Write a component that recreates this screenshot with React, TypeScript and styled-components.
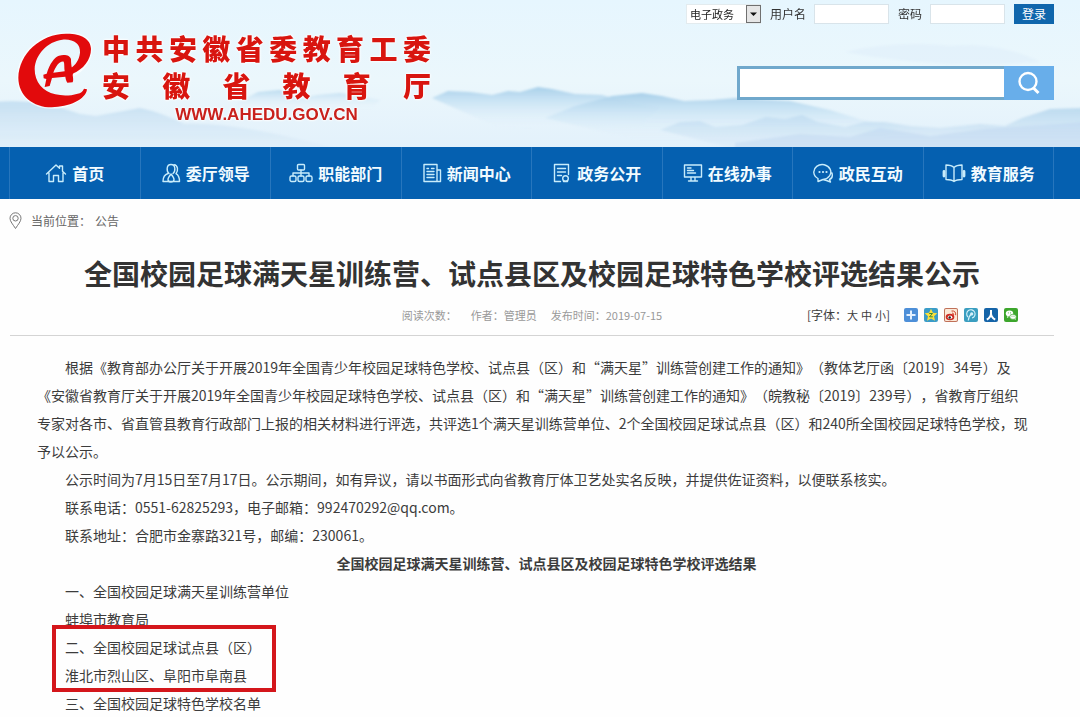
import React from "react";
import styled, { createGlobalStyle } from "styled-components";

const GlobalStyle = createGlobalStyle`
  * { box-sizing: border-box; }
  body {
    margin: 0;
    background: #fefefe;
    color: #3c3c3c;
    font-family: "Noto Sans CJK SC", "Microsoft YaHei", sans-serif;
    font-size: 14px;
    text-spacing-trim: space-all;
  }
  p, h1, h2 { margin: 0; }
  button, input, select { font-family: inherit; }
  button { cursor: pointer; }
`;

/* ---------- header ---------- */

const Header = styled.header`
  position: relative;
  overflow: hidden;
  background: #e8f6fd;
`;

const Backdrop = styled.svg`
  position: absolute;
  inset: 0;
  width: 100%;
  height: 100%;
`;

const HeaderInner = styled.div`
  position: relative;
  display: flex;
  justify-content: space-between;
  align-items: flex-start;
  padding: 0 26px 22px 12px;
`;

const Brand = styled.a`
  display: flex;
  align-items: flex-start;
  gap: 7px;
  padding-top: 30px;
  color: #d8150f;
  text-decoration: none;
`;

const BrandText = styled.div`
  width: 329px;
  text-shadow: 0 0 2px #fff, 0 0 2px #fff, 0 0 3px #fff;
`;

const BrandName = styled.div`
  font-size: 28px;
  line-height: 37px;
  font-weight: 900;
  text-align: justify;
  text-align-last: justify;
`;

const BrandUrl = styled.div`
  font-family: "Liberation Sans", Arial, sans-serif;
  font-size: 17px;
  line-height: 21px;
  font-weight: 700;
  text-align: center;
  color: #c8201c;
`;

const HeaderTools = styled.div`
  display: flex;
  flex-direction: column;
  align-items: flex-end;
  gap: 42px;
  padding-top: 4px;
`;

const LoginForm = styled.form`
  display: flex;
  align-items: center;
  gap: 9px;
  font-size: 12px;
  line-height: 20px;
  color: #333;
`;

const LoginField = styled.label`
  display: flex;
  align-items: center;
  gap: 8px;
`;

const LoginInput = styled.input`
  width: 75px;
  height: 20px;
  border: 1px solid #d9e4ea;
  background: #fff;
  padding: 0 4px;
  font-size: 12px;
`;

const SelectBox = styled.div`
  position: relative;
  display: flex;
`;

const RoleSelect = styled.select`
  appearance: none;
  width: 75px;
  height: 20px;
  padding: 0 3px;
  border: 1px solid #e3ebee;
  border-radius: 0;
  background: #fff;
  color: #222;
  font-size: 11px;
`;

const SelectArrow = styled.svg`
  position: absolute;
  right: 0;
  top: 1px;
  pointer-events: none;
`;

const LoginButton = styled.button`
  width: 40px;
  height: 20px;
  border: 0;
  padding: 0;
  background: #0f66ac;
  color: #fff;
  font-size: 12px;
  line-height: 20px;
`;

const SearchForm = styled.form`
  display: flex;
  width: 317px;
  height: 34px;
`;

const SearchInput = styled.input`
  flex: 1;
  min-width: 0;
  border: 3px solid #70a8cc;
  border-right: 0;
  background: #fff;
  padding: 0 8px;
  font-size: 14px;
`;

const SearchButton = styled.button`
  display: flex;
  align-items: center;
  justify-content: center;
  width: 50px;
  border: 0;
  padding: 0;
  background: #68aeea;
`;

/* ---------- navigation ---------- */

const NavBar = styled.nav`
  padding: 0 26px 0 9px;
  background: #0560b0;
`;

const NavList = styled.ul`
  display: flex;
  margin: 0;
  padding: 0;
  list-style: none;
  border-right: 1px solid #2776bd;
`;

const NavItem = styled.li`
  flex: 1;
  border-left: 1px solid #2776bd;
`;

const NavLink = styled.a`
  display: flex;
  align-items: center;
  justify-content: center;
  gap: 5px;
  height: 52px;
  color: #f2fbff;
  font-size: 16px;
  font-weight: 700;
  text-decoration: none;
`;

const NavIcon = styled.svg`
  flex: none;
  height: 20px;
  fill: none;
  stroke: #c8ecfb;
  stroke-width: 1.4;
  stroke-linejoin: round;
  stroke-linecap: round;
`;

/* ---------- article ---------- */

const Breadcrumb = styled.div`
  display: flex;
  align-items: center;
  gap: 9px;
  padding: 11px 26px 0 9px;
  font-size: 12px;
  line-height: 22px;
  color: #666;
`;

const CrumbLink = styled.a`
  margin-left: 4px;
  color: #666;
  text-decoration: none;
`;

const Article = styled.article`
  padding: 21px 26px 0 10px;
`;

const Title = styled.h1`
  font-size: 28px;
  line-height: 40px;
  font-weight: 700;
  text-align: center;
  color: #333;
`;

const MetaRow = styled.div`
  display: grid;
  grid-template-columns: 1fr auto 1fr;
  align-items: center;
  height: 43px;
  padding-top: 2px;
  border-bottom: 1px solid #d4d4d4;
`;

const Meta = styled.div`
  grid-column: 2;
  display: flex;
  gap: 14px;
  font-size: 11px;
  line-height: 16px;
  color: #999;
`;

const MetaTools = styled.div`
  display: flex;
  align-items: center;
  justify-content: flex-end;
  gap: 14px;
  padding-right: 36px;
  font-size: 12px;
  line-height: 16px;
`;

const SizePicker = styled.div`
  display: flex;
  white-space: nowrap;
`;

const SizeButton = styled.button`
  border: 0;
  padding: 0;
  margin-right: 3px;
  background: none;
  color: inherit;
  font-size: 11px;
  line-height: 16px;
  &:last-of-type { margin-right: 0; }
`;

const ShareList = styled.div`
  display: flex;
  gap: 6px;
`;

const ShareLink = styled.a`
  display: flex;
`;

const Body = styled.div`
  padding: 17px 26px 0 27px;
  line-height: 28px;
`;

const Para = styled.p`
  text-indent: 28px;
`;

const BodyHeading = styled.h2`
  font-size: 14px;
  line-height: 28px;
  font-weight: 700;
  text-align: center;
  padding-left: 28px;
`;

const Marked = styled.div`
  position: relative;
  width: fit-content;
  &::after {
    content: "";
    position: absolute;
    inset: -8px -15px -3px 15px;
    border: 4px solid #d4161b;
    pointer-events: none;
  }
`;

function HeaderBackdrop() {
  return (
    <Backdrop viewBox="0 0 1080 147" preserveAspectRatio="none" aria-hidden="true">
      <defs>
        <linearGradient id="sky" x1="0" y1="0" x2="0" y2="1">
          <stop offset="0" stopColor="#e6f6fe" />
          <stop offset="0.55" stopColor="#ebf7fc" />
          <stop offset="1" stopColor="#e3f1fb" />
        </linearGradient>
        <linearGradient id="ridge" x1="0" y1="0" x2="0" y2="1">
          <stop offset="0" stopColor="#a9d0ea" />
          <stop offset="0.4" stopColor="#c9e3f4" stopOpacity="0.8" />
          <stop offset="1" stopColor="#e4f2fb" stopOpacity="0" />
        </linearGradient>
        <linearGradient id="near" x1="0" y1="0" x2="0" y2="1">
          <stop offset="0" stopColor="#bcdaef" />
          <stop offset="1" stopColor="#d8e9f7" stopOpacity="0.3" />
        </linearGradient>
        <filter id="soft" x="-5%" y="-20%" width="110%" height="140%">
          <feGaussianBlur stdDeviation="1" />
        </filter>
      </defs>
      <rect width="1080" height="147" fill="url(#sky)" />
      <g filter="url(#soft)">
        <path d="M845 52 Q900 40 950 46 Q1000 42 1040 62 Q940 70 845 52Z" fill="#dfeefa" opacity="0.6" />
        <path d="M-5 102 Q40 98 80 114 L96 116 L140 108 Q160 112 185 124 Q240 122 340 150 H-5Z" fill="url(#near)" opacity="0.8" />
        <path d="M235 104 L258 92 L280 90 L300 98 L318 95 L340 93 L380 100 L372 108 H240Z" fill="url(#ridge)" opacity="0.7" />
        <path d="M432 98 L448 91 L470 92 L492 95 L508 91 L520 92 L538 87 L552 89 L575 94 L602 95 L620 100 L660 108 L640 126 L500 128Z" fill="url(#ridge)" />
        <path d="M545 118 L575 106 L612 96 L642 93 L662 96 L684 101 L712 100 L735 98 L790 101 L830 110 L862 120 L900 126 L880 140 H640Z" fill="url(#ridge)" />
        <path d="M660 130 L680 122 L700 121 L715 127 L742 125 L766 117 L785 119 L802 115 L818 122 L845 127 L864 122 L885 122 L910 126 L940 128 L980 124 L1005 126 L1022 118 L1050 109 L1085 108 V150 H740Z" fill="url(#near)" />
        <path d="M735 143 L800 134 L850 137 L880 128 L930 136 L985 129 L1085 122 V150 H735Z" fill="#b9d3ee" opacity="0.4" />
      </g>
    </Backdrop>
  );
}

function Logo() {
  return (
    <svg width="83" height="83" viewBox="6 15 249 249" aria-hidden="true">
      <path
        d="M228 190C227 218 180 247 125 247C70 247 25 213 25 158C27 85 92 27 168 26C212 25 243 42 243 72C242 104 220 136 190 150"
        fill="none"
        stroke="#fff"
        strokeWidth="9"
        opacity="0.7"
      />
      <path
        fill="#e20a0c"
        d="M231 193L222 191C218 200 212 205 203 206C180 213 156 213 136 208C98 199 74 171 74 132C76 88 112 50 157 44C190 41 212 56 210 83C208 104 196 121 182 129L187 146C220 134 243 104 243 72C243 42 212 25 168 26C92 27 27 85 25 158C25 213 70 247 125 247C176 246 228 224 231 193Z"
      />
      <path
        fill="#e20a0c"
        fillRule="evenodd"
        d="M100 149L110 146C119 116 133 97 147 92C164 87 181 91 183 103C183 112 184 122 186 130L192 138L188 150C189 158 191 166 188 172L172 173C168 168 167 160 166 155L126 159L119 183L104 186L109 162L101 160ZM130 143L164 139C162 128 164 116 161 110C147 108 138 124 130 143Z"
      />
    </svg>
  );
}

const navItems = [
  {
    label: "首页",
    width: 22,
    icon: (
      <path d="M1.5 11L11 2l3.5 3.300V3h3v5.200L20.500 11M4 10v8.500h4.500v-6h5v6H18V10" />
    ),
  },
  {
    label: "委厅领导",
    width: 20,
    icon: (
      <>
        <path d="M8 10.500C5.500 8.500 5 1.500 10 1.500s4.500 7 2 9M7 10.500c-3 1-5 3.500-5 8h7" />
        <path d="M13 1.700c4 .3 4.500 6 2 9 2.300 1.300 3.500 4 3.500 7.800H9.500M10 11c-2 2.500-3 4-3 5.500a3 2.500 0 0 0 6 0C13 15 12 13.500 10 11z" />
      </>
    ),
  },
  {
    label: "职能部门",
    width: 24,
    icon: (
      <>
        <rect x="8.500" y="1.500" width="7" height="5.500" rx="1" />
        <path d="M12 7v6M4 13v-3h16v3" />
        <rect x="1" y="13" width="6" height="5.500" rx="1.500" />
        <rect x="9" y="13" width="6" height="5.500" rx="1.500" />
        <rect x="17" y="13" width="6" height="5.500" rx="1.500" />
      </>
    ),
  },
  {
    label: "新闻中心",
    width: 20,
    icon: (
      <path d="M15 18.500H2v-17h13v17h3.500V7H15M5 5.500h1.500M9.500 5.500h2.500M5 8.500h7M5 11.500h7M5 14.500h7" />
    ),
  },
  {
    label: "政务公开",
    width: 20,
    icon: (
      <>
        <path d="M8.500 18.500H2.500v-17h14v10M5.500 5.500h8M5.500 9h8M5.500 12.500h4" />
        <circle cx="13.500" cy="15.500" r="2.800" />
        <path d="M11.500 18.500h4" />
      </>
    ),
  },
  {
    label: "在线办事",
    width: 20,
    icon: (
      <path d="M1.500 2h17v12h-17zM4.500 5h3.500M4.500 7.500h6M4.500 10h8M8 14v3.500M12 14v3.500M5.500 18h9" />
    ),
  },
  {
    label: "政民互动",
    width: 21,
    icon: (
      <>
        <path d="M5 15.500A8.500 7.500 0 1 1 10 16.500L5 18.500zM19 10c1 4-1 6-2.500 6.500l1 2.500-4-1.500c-1.500 0-2.500-.3-3.500-1" />
        <path d="M6.500 9h.01M10 9h.01M13.500 9h.01" strokeWidth="2.200" />
      </>
    ),
  },
  {
    label: "教育服务",
    width: 24,
    icon: (
      <>
        <path d="M12 4.500C9.500 2 7 2 4 2v14.500c3 0 5.500 0 8 2 2.500-2 5-2 8-2V2c-3 0-5.500 0-8 2.500zM12 4.500v14" />
        <path d="M2 8.500v4.500M22 8.500v4.500" strokeWidth="2.800" />
      </>
    ),
  },
];

const shareItems = [
  {
    label: "分享",
    bg: "#4d8fd8",
    mark: <path d="M7 2.500v9M2.500 7h9" stroke="#e4f1ff" strokeWidth="2" />,
  },
  {
    label: "QQ空间",
    bg: "#3a9cc8",
    mark: (
      <>
        <path d="M7 .8l1.900 3.900 4.400.5-3.300 3 1 4.500L7 10.500l-4 2.200 1-4.500-3.300-3 4.400-.5z" fill="#fbe03a" />
        <path d="M5.200 5.500h3.300L5.500 8.800h3.300" stroke="#3a8a3a" fill="none" />
      </>
    ),
  },
  {
    label: "新浪微博",
    bg: "#c07058",
    mark: (
      <>
        <rect x="1" y="1" width="12" height="12" rx="1" fill="#fbe9d8" />
        <ellipse cx="6" cy="9" rx="4.300" ry="3.200" fill="#cf2a22" />
        <ellipse cx="6" cy="9.300" rx="2.300" ry="1.700" fill="#fff" />
        <circle cx="5.700" cy="9.500" r="1.200" fill="#222" />
        <path d="M7.500 3c3-.4 4.500 1 4.200 4.200M8 5.200c1.300-.1 1.800.4 1.600 1.800" stroke="#d2422a" fill="none" />
      </>
    ),
  },
  {
    label: "腾讯微博",
    bg: "#3a9ec0",
    mark: (
      <>
        <path d="M4 9A4.200 4.200 0 1 1 8 10" stroke="#d5f1fa" strokeWidth="1.100" fill="none" />
        <path d="M7.500 6C5.500 7.500 4.500 9.500 4.300 12.500" stroke="#d5f1fa" strokeWidth="1.200" fill="none" />
        <circle cx="7.700" cy="5.900" r="1.600" fill="#d5f1fa" />
      </>
    ),
  },
  {
    label: "人人网",
    bg: "#1564a8",
    mark: <path d="M7 2v3.500C7 8 5.500 10 2.800 11.700M7 5.500C7 8 8.500 10 11.200 11.700" stroke="#fff" strokeWidth="2" fill="none" />,
  },
  {
    label: "微信",
    bg: "#3da62c",
    mark: (
      <>
        <ellipse cx="5.500" cy="5.500" rx="3.700" ry="3" fill="#fff" />
        <ellipse cx="9" cy="8.800" rx="3.300" ry="2.600" fill="#fff" stroke="#3da62c" strokeWidth="0.700" />
        <path d="M3.500 8l-.7 2 2-1zM10.500 11l1.300 1-.3-1.700z" fill="#fff" />
        <path d="M4.300 4.900h.01M6.600 4.900h.01M8 8.200h.01M10 8.200h.01" stroke="#3da62c" strokeLinecap="round" />
      </>
    ),
  },
];

export default function App() {
  return (
    <>
      <GlobalStyle />
      <Header>
        <HeaderBackdrop />
        <HeaderInner>
          <Brand href="#">
            <Logo />
            <BrandText>
              <BrandName>中共安徽省委教育工委</BrandName>
              <BrandName>安徽省教育厅</BrandName>
              <BrandUrl>WWW.AHEDU.GOV.CN</BrandUrl>
            </BrandText>
          </Brand>
          <HeaderTools>
            <LoginForm onSubmit={(e) => e.preventDefault()}>
              <SelectBox>
                <RoleSelect aria-label="登录系统" defaultValue="gov">
                  <option value="gov">电子政务</option>
                </RoleSelect>
                <SelectArrow width="15" height="18" viewBox="0 0 15 18" aria-hidden="true">
                  <rect x="0.500" y="0.500" width="14" height="17" fill="#e6e6e6" stroke="#707070" />
                  <path d="M4 7.500h7L7.500 11z" fill="#111" />
                </SelectArrow>
              </SelectBox>
              <LoginField>
                用户名
                <LoginInput type="text" />
              </LoginField>
              <LoginField>
                密码
                <LoginInput type="password" />
              </LoginField>
              <LoginButton type="submit">登录</LoginButton>
            </LoginForm>
            <SearchForm onSubmit={(e) => e.preventDefault()}>
              <SearchInput type="text" aria-label="搜索" />
              <SearchButton type="submit" aria-label="搜索">
                <svg width="24" height="24" viewBox="0 0 24 24" fill="none" stroke="#fff" strokeWidth="2.400">
                  <circle cx="11" cy="10.500" r="8.500" />
                  <path d="M16.500 17l5 5" strokeWidth="3" />
                </svg>
              </SearchButton>
            </SearchForm>
          </HeaderTools>
        </HeaderInner>
      </Header>

      <NavBar>
        <NavList>
          {navItems.map((item) => (
            <NavItem key={item.label}>
              <NavLink href="#">
                <NavIcon width={item.width} viewBox={`0 0 ${item.width} 20`} aria-hidden="true">
                  {item.icon}
                </NavIcon>
                {item.label}
              </NavLink>
            </NavItem>
          ))}
        </NavList>
      </NavBar>

      <Breadcrumb>
        <svg width="13" height="18" viewBox="0 0 13 18" fill="none" stroke="#777" aria-hidden="true">
          <path d="M6.500 16.500C4 12.500 1 9.500 1 6.300a5.500 5.500 0 0 1 11 0c0 3.200-3 6.200-5.500 10.200z" />
          <circle cx="6.500" cy="6.300" r="2.700" />
        </svg>
        <div>
          当前位置：
          <CrumbLink href="#">公告</CrumbLink>
        </div>
      </Breadcrumb>

      <Article>
        <Title>全国校园足球满天星训练营、试点县区及校园足球特色学校评选结果公示</Title>
        <MetaRow>
          <Meta>
            <span>阅读次数：</span>
            <span>作者：管理员</span>
            <span>发布时间：2019-07-15</span>
          </Meta>
          <MetaTools>
            <SizePicker>
              [字体：
              <SizeButton type="button">大</SizeButton>
              <SizeButton type="button">中</SizeButton>
              <SizeButton type="button">小</SizeButton>]
            </SizePicker>
            <ShareList>
              {shareItems.map((item) => (
                <ShareLink key={item.label} href="#" aria-label={item.label}>
                  <svg width="14" height="14" viewBox="0 0 14 14" fill="none">
                    <rect width="14" height="14" rx="2" fill={item.bg} />
                    {item.mark}
                  </svg>
                </ShareLink>
              ))}
            </ShareList>
          </MetaTools>
        </MetaRow>

        <Body>
          <Para>
            根据《教育部办公厅关于开展2019年全国青少年校园足球特色学校、试点县（区）和“满天星”训练营创建工作的通知》（教体艺厅函〔2019〕34号）及《安徽省教育厅关于开展2019年全国青少年校园足球特色学校、试点县（区）和“满天星”训练营创建工作的通知》（皖教秘〔2019〕239号），省教育厅组织专家对各市、省直管县教育行政部门上报的相关材料进行评选，共评选1个满天星训练营单位、2个全国校园足球试点县（区）和240所全国校园足球特色学校，现予以公示。
          </Para>
          <Para>公示时间为7月15日至7月17日。公示期间，如有异议，请以书面形式向省教育厅体卫艺处实名反映，并提供佐证资料，以便联系核实。</Para>
          <Para>联系电话：0551-62825293，电子邮箱：992470292@qq.com。</Para>
          <Para>联系地址：合肥市金寨路321号，邮编：230061。</Para>
          <BodyHeading>全国校园足球满天星训练营、试点县区及校园足球特色学校评选结果</BodyHeading>
          <Para>一、全国校园足球满天星训练营单位</Para>
          <Para>蚌埠市教育局</Para>
          <Marked>
            <Para>二、全国校园足球试点县（区）</Para>
            <Para>淮北市烈山区、阜阳市阜南县</Para>
          </Marked>
          <Para>三、全国校园足球特色学校名单</Para>
        </Body>
      </Article>
    </>
  );
}
